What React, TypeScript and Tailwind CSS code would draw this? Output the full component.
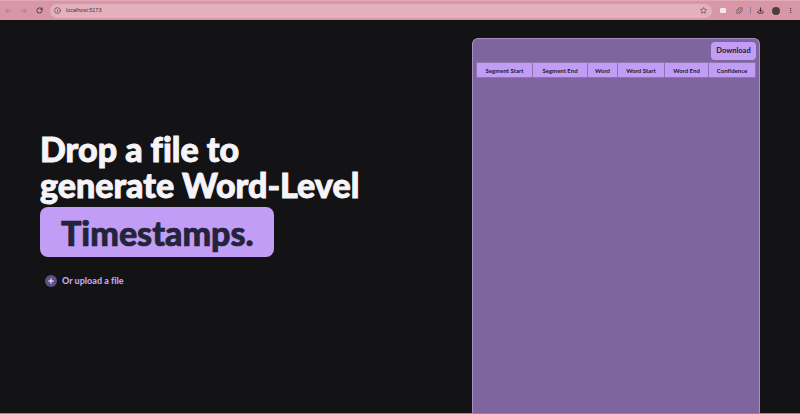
import { ArrowLeft, ArrowRight, RotateCw, Star, Puzzle, Download, EllipsisVertical, Plus, Info } from "lucide-react";

const cols: [string, string][] = [
  ["Segment Start", "w-[56px]"],
  ["Segment End", "w-[55px]"],
  ["Word", "w-[30px]"],
  ["Word Start", "w-[47px]"],
  ["Word End", "w-[44px]"],
  ["Confidence", "w-[47px]"],
];

export default function App() {
  return (
    <div className="w-[800px] h-[414px] overflow-hidden flex flex-col bg-[#131214] font-['Lato',sans-serif] [font-variant-ligatures:none]">
      <header className="h-5 shrink-0 flex items-center bg-[#d797a8] border-t border-[#e3aab6] pl-[4px] text-[#7a4f5c]">
        <ArrowLeft size={8} className="opacity-50" />
        <ArrowRight size={8} className="ml-[8px] opacity-50" />
        <RotateCw size={7} strokeWidth={3} className="ml-[8px] text-[#4a3038]" />
        <div className="ml-[7px] w-[662px] h-[14px] rounded-full bg-[#e3b0bd] flex items-center pl-[4px] pr-[5px]">
          <Info size={7} className="text-[#4a3038]" />
          <span className="ml-[5px] text-[5.5px] text-[#4a3038] font-['Liberation_Sans',sans-serif]">localhost:5173</span>
          <Star size={7} className="ml-auto text-[#4a3038]" />
        </div>
        <div className="ml-[8px] w-[6px] h-[5px] rounded-[1px] bg-[#f3e6ea]" />
        <Puzzle size={7} className="ml-[10px] text-[#4a3038]" />
        <div className="ml-[7px] w-px h-[7px] bg-[#8d7a9c]" />
        <Download size={7} strokeWidth={3} className="ml-[6px] text-[#3a2830]" />
        <div className="ml-[8px] w-2 h-2 rounded-full bg-[#4d3f38]" />
        <EllipsisVertical size={7} className="ml-[7px] text-[#4a3038]" />
      </header>
      <main className="flex-1 flex min-h-0 border-b border-[#8f8d93]">
        <section className="w-[472px] shrink-0 flex flex-col pl-10 pt-[111px]">
          <h1 className="text-[34px] leading-[36px] font-black text-[#f6f4f8] [-webkit-text-stroke:0.9px_#f6f4f8]">
            Drop a file to
            <br />
            generate Word-Level
          </h1>
          <div className="mt-1 w-[234px] h-[50px] rounded-lg bg-[#c19df6] flex items-center pl-[21px] text-[34px] font-black text-[#23233a] [-webkit-text-stroke:0.7px_#23233a]">
            Timestamps.
          </div>
          <button className="mt-[17px] ml-[5px] flex items-center gap-[5px] text-[#bfa3ea] text-[9px] font-black">
            <span className="w-3 h-3 rounded-full bg-[#5f4f84] flex items-center justify-center text-white">
              <Plus size={8} strokeWidth={3} />
            </span>
            Or upload a file
          </button>
        </section>
        <section className="mt-[18px] w-[288px] bg-[#7f659d] rounded-t-md border border-b-0 border-[#a88fc7] px-[3px] pt-[3px] flex flex-col">
          <button className="self-end w-[45px] h-[18px] rounded-[4px] bg-[#c19df6] text-[#1d1a2a] text-[7.5px] font-bold flex items-center justify-center">
            Download
          </button>
          <div className="mt-[2px] flex h-[16px] bg-[#c19df6] border border-[#8f74b2]">
            {cols.map(([label, w], i) => (
              <div key={label} className={`${w} ${i === cols.length - 1 ? "flex-1" : "border-r border-[#8f74b2]"} shrink-0 flex items-center justify-center text-[6px] font-bold text-[#1d1a2a] whitespace-nowrap`}>
                {label}
              </div>
            ))}
          </div>
        </section>
      </main>
    </div>
  );
}
